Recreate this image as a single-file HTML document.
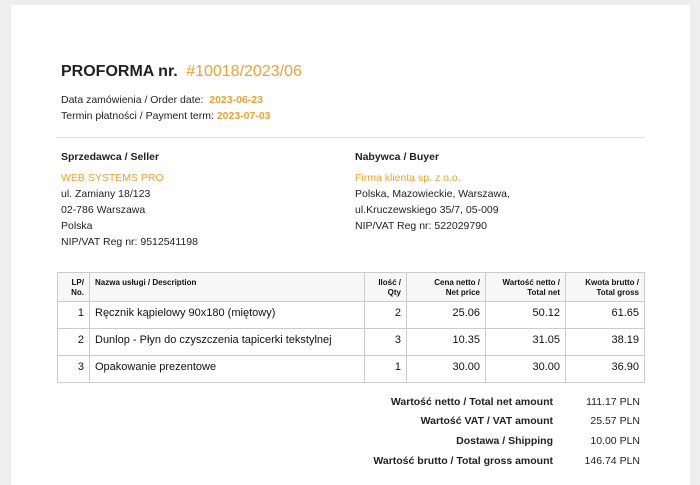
<!DOCTYPE html>
<html><head><meta charset="utf-8"><style>
body{margin:0;background:#eee;width:700px;height:478px;overflow:hidden;font-family:"Liberation Sans",sans-serif;color:#222}
.page{position:absolute;left:11px;top:5px;width:679px;height:480px;background:#fff}
.a{position:absolute;white-space:nowrap}
.o{color:#f0a030}
.t{font-size:10.5px;line-height:16px}
table{position:absolute;left:57px;top:272px;width:588px;border-collapse:collapse;font-size:11px;color:#111}
td,th{border:1px solid #ccc;padding:3px 5px;vertical-align:top}
th{font-size:8px;font-weight:bold;text-align:right;line-height:10px;background:#f7f7f7;height:19px;padding-top:5px;color:#111}
td{height:18px;padding-top:5px;text-align:right}
.l{text-align:left}
.tot{position:absolute;font-size:10.5px;font-weight:bold;text-align:right;width:200px;left:353px}
.v{position:absolute;font-size:10.5px;text-align:right;width:80px;left:560px}
</style></head><body><div class="page"></div>
<div class="a" style="left:61px;top:63px;font-size:16px;font-weight:bold">PROFORMA nr. <span class="o" style="font-weight:normal;margin-left:4px">#10018/2023/06</span></div>
<div class="a t" style="left:61px;top:92px">Data zamówienia / Order date: &nbsp;<b class="o">2023-06-23</b><br>Termin płatności / Payment term: <b class="o">2023-07-03</b></div>
<div class="a" style="left:56px;top:137px;width:589px;height:1px;background:#e2e2e2"></div>
<div class="a t" style="left:61px;top:149px"><b>Sprzedawca / Seller</b></div>
<div class="a t" style="left:61px;top:170px"><span class="o">WEB SYSTEMS PRO</span><br>ul. Zamiany 18/123<br>02-786 Warszawa<br>Polska<br>NIP/VAT Reg nr: 9512541198</div>
<div class="a t" style="left:355px;top:149px"><b>Nabywca / Buyer</b></div>
<div class="a t" style="left:355px;top:170px"><span class="o">Firma klienta sp. z o.o.</span><br>Polska, Mazowieckie, Warszawa,<br>ul.Kruczewskiego 35/7, 05-009<br>NIP/VAT Reg nr: 522029790</div>
<table>
<tr><th style="width:21px">LP/<br>No.</th><th class="l">Nazwa usługi / Description</th><th style="width:31px">Ilość /<br>Qty</th><th style="width:68px">Cena netto /<br>Net price</th><th style="width:69px">Wartość netto /<br>Total net</th><th style="width:68px">Kwota brutto /<br>Total gross</th></tr>
<tr><td>1</td><td class="l">Ręcznik kąpielowy 90x180 (miętowy)</td><td>2</td><td>25.06</td><td>50.12</td><td>61.65</td></tr>
<tr><td>2</td><td class="l">Dunlop - Płyn do czyszczenia tapicerki tekstylnej</td><td>3</td><td>10.35</td><td>31.05</td><td>38.19</td></tr>
<tr><td>3</td><td class="l">Opakowanie prezentowe</td><td>1</td><td>30.00</td><td>30.00</td><td>36.90</td></tr>
</table>
<div class="tot" style="top:396px">Wartość netto / Total net amount</div><div class="v" style="top:396px">111.17 PLN</div>
<div class="tot" style="top:415px">Wartość VAT / VAT amount</div><div class="v" style="top:415px">25.57 PLN</div>
<div class="tot" style="top:435px">Dostawa / Shipping</div><div class="v" style="top:435px">10.00 PLN</div>
<div class="tot" style="top:455px">Wartość brutto / Total gross amount</div><div class="v" style="top:455px">146.74 PLN</div>
</body></html>
